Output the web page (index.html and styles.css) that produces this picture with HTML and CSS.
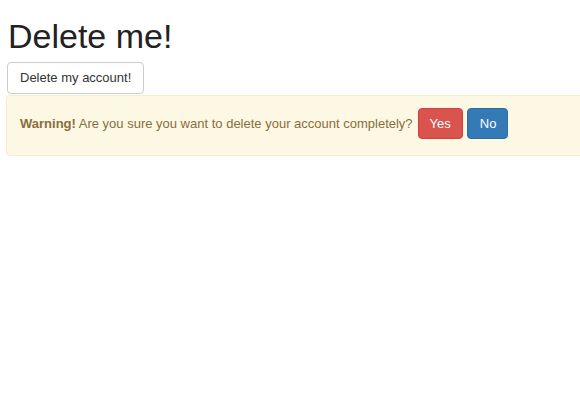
FILE: index.html
```html
<!DOCTYPE html>
<html>
<head>
<meta charset="utf-8">
<link rel="stylesheet" href="styles.css">
</head>
<body>
<div class="page">
  <h1 class="title">Delete me!</h1>
  <button class="btn btn-default">Delete my account!</button>
  <div class="alert">
    <span class="alert-text"><strong>Warning!</strong> Are you sure you want to delete your account completely?</span>
    <button class="btn btn-danger">Yes</button>
    <button class="btn btn-primary">No</button>
  </div>
</div>
</body>
</html>
```
FILE: styles.css
```css
html, body {
  margin: 0;
  padding: 0;
  background: #fff;
  overflow: hidden;
}
.page {
  padding: 0 0 0 6px;
  font-family: "Liberation Sans", Arial, sans-serif;
  color: #333;
}
.title {
  margin: 18px 0 7px 2px;
  font-size: 34px;
  line-height: 37px;
  font-weight: 500;
  color: #222;
}
.btn {
  display: inline-block;
  font-family: "Liberation Sans", Arial, sans-serif;
  font-size: 13px;
  line-height: 29px;
  height: 31px;
  padding: 0 11px;
  border: 1px solid transparent;
  border-radius: 4px;
  cursor: pointer;
  box-sizing: border-box;
}
.btn-default {
  display: block;
  margin-left: 1px;
  height: 32px;
  line-height: 30px;
  padding: 0 12px;
  background: #fff;
  border-color: #ccc;
  color: #333;
}
.btn-danger {
  background: #d9534f;
  border-color: #d43f3a;
  color: #fff;
}
.btn-primary {
  background: #337ab7;
  border-color: #2e6da4;
  color: #fff;
  padding: 0 11px 0 12px;
}
.alert {
  display: flex;
  align-items: center;
  gap: 4px;
  margin-top: 1px;
  margin-right: -20px;
  padding: 12px 13px 16px 13px;
  background: #fcf8e3;
  border: 1px solid #faebcc;
  border-radius: 4px;
  color: #8a6d3b;
  font-size: 13px;
}
.alert-text {
  margin-right: 1px;
}
.alert-text strong {
  font-weight: bold;
}
```
